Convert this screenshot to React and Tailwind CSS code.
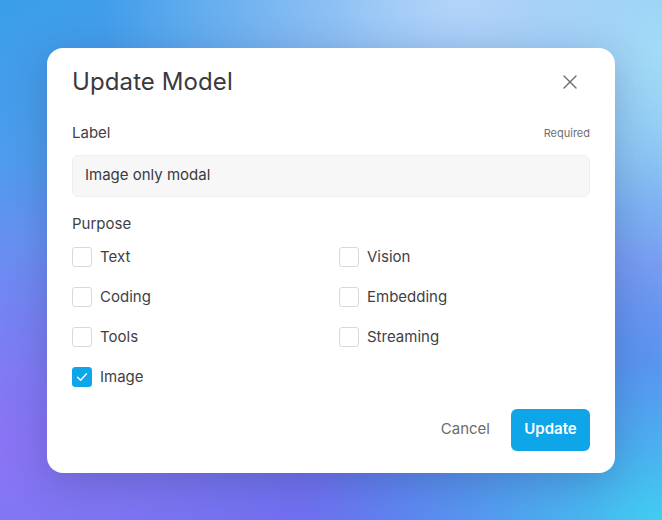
import React, { useState } from "react";

function Check({ label, checked, onToggle }) {
  return (
    <label className="flex items-center gap-2 h-5 cursor-pointer select-none" onClick={onToggle}>
      <span
        className={
          checked
            ? "flex items-center justify-center w-5 h-5 rounded-[3px] bg-[#0ea5e9] border border-[#0ea5e9]"
            : "flex items-center justify-center w-5 h-5 rounded-[3px] bg-white border border-[#d9d9d9]"
        }
      >
        {checked && (
          <svg width="14" height="14" viewBox="0 0 14 14" fill="none">
            <path d="M2.5 7.3 L5.6 10.3 L11.5 3.8" stroke="white" strokeWidth="1.4" strokeLinecap="round" strokeLinejoin="round" />
          </svg>
        )}
      </span>
      <span className="text-[15px] text-[#3f3f46] leading-5">{label}</span>
    </label>
  );
}

export default function App() {
  const [state, setState] = useState({
    Text: false,
    Vision: false,
    Coding: false,
    Embedding: false,
    Tools: false,
    Streaming: false,
    Image: true,
  });
  const items = ["Text", "Vision", "Coding", "Embedding", "Tools", "Streaming", "Image"];
  return (
    <div
      className="w-full h-screen flex items-center justify-center bg-[radial-gradient(ellipse_60%_55%_at_0%_85%,#8a74f5_0%,rgba(120,100,240,0)_100%),radial-gradient(ellipse_55%_50%_at_100%_100%,#40cdf0_0%,rgba(64,205,240,0)_100%),radial-gradient(ellipse_55%_45%_at_70%_0%,#b4d4f9_0%,rgba(180,212,249,0)_100%),radial-gradient(ellipse_50%_60%_at_100%_10%,#95e0f6_0%,rgba(149,224,246,0)_100%),linear-gradient(160deg,#3a9ee8_0%,#5a9cf0_35%,#6a7ef0_65%,#6a5ef0_100%)]"
      style={{ fontFamily: "Inter, 'Noto Sans', sans-serif" }}
    >
      <div className="w-[568px] bg-white rounded-2xl shadow-[0_10px_40px_rgba(30,40,90,0.25)] px-[25px] pt-[18px] pb-[22px]">
        <div className="flex items-center justify-between h-8">
          <h1 className="text-[24px] font-normal text-[#3a3a40] leading-8 tracking-[0.1px]">Update Model</h1>
          <button className="w-[30px] h-[30px] flex items-center justify-center mr-[5px]">
            <svg width="16" height="16" viewBox="0 0 16 16" fill="none">
              <path d="M2 2 L14 14 M14 2 L2 14" stroke="#6b6b70" strokeWidth="1.4" strokeLinecap="round" />
            </svg>
          </button>
        </div>

        <div className="mt-[26px] flex items-center justify-between h-5">
          <span className="text-[15px] text-[#3f3f46]">Label</span>
          <span className="text-[11px] text-[#6f6f75]">Required</span>
        </div>
        <div className="mt-[11px] h-[42px] rounded-md bg-[#f7f7f7] border border-[#efefef] flex items-center px-[12px]">
          <span className="text-[15px] text-[#3a3a40]">Image only modal</span>
        </div>

        <div className="mt-[18px] h-5 flex items-center">
          <span className="text-[15px] text-[#3f3f46]">Purpose</span>
        </div>
        <div className="mt-3 grid grid-cols-2 gap-x-4 gap-y-5">
          {items.map((it) => (
            <Check
              key={it}
              label={it}
              checked={state[it]}
              onToggle={(e) => {
                e.preventDefault();
                setState((s) => ({ ...s, [it]: !s[it] }));
              }}
            />
          ))}
        </div>

        <div className="mt-[22px] flex items-center justify-end">
          <button className="text-[15px] text-[#6b6b70] mr-[21px]">Cancel</button>
          <button className="h-[42px] w-[79px] rounded-md bg-[#0ea5e9] text-white text-[15px] font-semibold">Update</button>
        </div>
      </div>
    </div>
  );
}
